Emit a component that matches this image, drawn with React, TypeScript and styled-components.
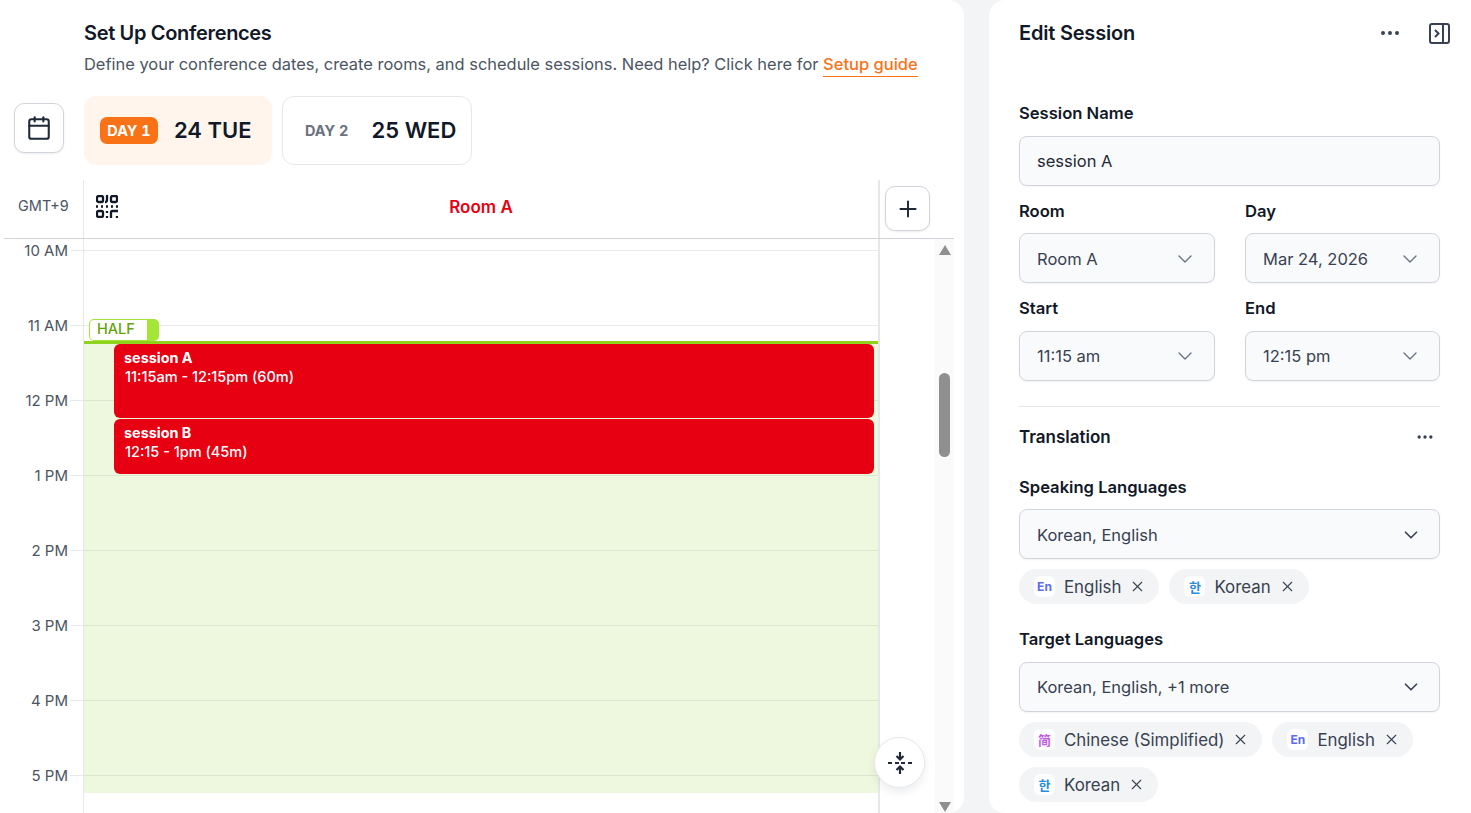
import React from "react";
import styled, { createGlobalStyle } from "styled-components";
import { Calendar, ChevronDown, Ellipsis, Plus, X } from "lucide-react";

const GlobalStyle = createGlobalStyle`
  html, body {
    margin: 0;
    padding: 0;
    height: 100%;
    overflow: hidden;
    background: #f3f4f6;
    font-family: Inter, "Noto Sans CJK KR", sans-serif;
    color: #111827;
  }
  * { box-sizing: border-box; }
`;

const Page = styled.div`
  display: flex;
  gap: 25px;
  height: 813px;
  overflow: hidden;
  background: #f3f4f6;
`;

// left side: the conference schedule
const SchedulePanel = styled.main`
  position: relative;
  width: 964px;
  height: 813px;
  flex: none;
  background: #fff;
  border-radius: 0 16px 16px 0;
  overflow: hidden;
`;

const Header = styled.header`
  padding: 21px 0 0 84px;
  height: 96px;
`;

const Title = styled.h1`
  margin: 0;
  font-size: 20px;
  line-height: 24px;
  font-weight: 600;
  letter-spacing: -0.33px;
  color: #111827;
`;

const Subtitle = styled.p`
  margin: 7px 0 0;
  font-size: 16.45px;
  line-height: 24px;
  color: #4b5563;
`;

const GuideLink = styled.a`
  color: #f97316;
  font-size: 16.5px;
  font-weight: 500;
  border-bottom: 1px solid #f97316;
  padding-bottom: 2px;
`;

const DayRow = styled.div`
  display: flex;
  height: 69px;
  padding-left: 14px;
`;

const IconButton = styled.button`
  display: flex;
  align-items: center;
  justify-content: center;
  width: ${(p) => p.$size}px;
  height: ${(p) => p.$size}px;
  flex: none;
  padding: 0;
  margin-top: ${(p) => p.$top ?? 0}px;
  background: #fff;
  border: 1px solid #d1d5db;
  border-radius: 10px;
  box-shadow: 0 1px 2px rgba(17, 24, 39, 0.08);
  color: #1f2937;
`;

const DayTabs = styled.div`
  display: flex;
  gap: 10px;
  margin-left: 20px;
`;

const DayTab = styled.div`
  display: flex;
  align-items: center;
  gap: ${(p) => (p.$active ? "16px" : "17px")};
  height: 69px;
  padding: ${(p) => (p.$active ? "0 19px 1px 15px" : "0 15px 1px 16px")};
  border-radius: 12px;
  background: ${(p) => (p.$active ? "#fff5ed" : "#fff")};
  border: 1px solid ${(p) => (p.$active ? "#fff5ed" : "#e5e7eb")};
`;

const DayBadge = styled.span`
  display: inline-flex;
  align-items: center;
  justify-content: center;
  width: ${(p) => (p.$active ? "58px" : "56px")};
  height: 27px;
  border-radius: 7px;
  font-size: 14.5px;
  font-weight: 700;
  font-variant-numeric: tabular-nums;
  color: ${(p) => (p.$active ? "#fff" : "#6b7280")};
  background: ${(p) => (p.$active ? "#f97316" : "transparent")};
`;

const DayDate = styled.span`
  font-size: 22px;
  font-weight: 600;
  color: #111827;
`;

const Schedule = styled.section`
  width: 950px;
  margin: 15px 0 0 4px;
`;

const ScheduleHead = styled.div`
  display: flex;
  height: 59px;
  border-bottom: 1px solid #d1d5db;
`;

const ZoneCell = styled.div`
  width: 80px;
  flex: none;
  padding: 17px 0 0 14px;
  font-size: 14.5px;
  line-height: 17px;
  font-variant-numeric: tabular-nums;
  color: #4b5563;
  border-right: 1px solid #e5e7eb;
`;

const RoomCell = styled.div`
  position: relative;
  width: 796px;
  flex: none;
  display: flex;
  align-items: center;
  justify-content: center;
  padding-bottom: 4px;
  font-size: 17px;
  font-weight: 600;
  color: #e60012;
  border-right: 2px solid #e5e7eb;
`;

const QrSlot = styled.span`
  position: absolute;
  left: 12px;
  top: 15px;
  display: flex;
  color: #111827;
`;

const AddCell = styled.div`
  padding: 6px 0 0 5px;
`;

const ScheduleBody = styled.div`
  display: flex;
  height: 574px;
`;

const Timeline = styled.div`
  position: relative;
  width: 876px;
  flex: none;
  padding-top: 11px;
  overflow: hidden;
  &::before {
    content: "";
    position: absolute;
    left: 79px;
    top: 0;
    bottom: 0;
    width: 1px;
    background: #e5e7eb;
  }
  &::after {
    content: "";
    position: absolute;
    left: 874px;
    top: 0;
    bottom: 0;
    width: 2px;
    background: #e5e7eb;
  }
`;

const HourRow = styled.div`
  display: flex;
  height: 75px;
`;

const HourLabel = styled.span`
  width: 66px;
  flex: none;
  margin-top: -8px;
  height: 18px;
  line-height: 18px;
  font-size: 15px;
  color: #4b5563;
  text-align: right;
  position: relative;
  z-index: 1;
  background: #fff;
  padding-right: 2px;
`;

const HourLine = styled.span`
  flex: 1;
  border-top: 1px solid #e9eaee;
  margin-right: 2px;
`;

const OpenHours = styled.div`
  position: absolute;
  left: 80px;
  top: 102px;
  width: 795px;
  height: 452px;
  background: rgba(132, 204, 22, 0.14);
  border-top: 3px solid #8fd31f;
`;

const HalfTag = styled.div`
  position: absolute;
  left: 85px;
  top: 80px;
  width: 70px;
  height: 22px;
  padding-left: 7px;
  font-size: 14.5px;
  line-height: 18px;
  font-weight: 500;
  color: #65a30d;
  background: #fff;
  border: 1px solid #a3e635;
  border-right: 12px solid #a3e635;
  border-radius: 5px;
`;

const SessionCard = styled.div`
  position: absolute;
  left: 110px;
  top: ${(p) => p.$top}px;
  width: 760px;
  height: ${(p) => p.$height}px;
  padding: 5px 10px;
  background: #e60012;
  border-radius: 6px;
  color: #fff;
`;

const SessionName = styled.div`
  font-size: 14.4px;
  line-height: 18px;
  font-weight: 700;
`;

const SessionTime = styled.div`
  margin-top: 1px;
  padding-left: 1px;
  font-size: 14.5px;
  line-height: 18px;
  font-weight: 500;
`;

const ScrollTrack = styled.div`
  width: 19px;
  margin-left: 55px;
  flex: none;
  display: flex;
  flex-direction: column;
  align-items: center;
  background: #fafafa;
  padding-top: 6px;
`;

const ScrollArrow = styled.span`
  width: 0;
  height: 0;
  border-left: 6.5px solid transparent;
  border-right: 6.5px solid transparent;
  border-bottom: ${(p) => (p.$down ? "0" : "10px solid #8f8f8f")};
  border-top: ${(p) => (p.$down ? "10px solid #8f8f8f" : "0")};
  margin-top: ${(p) => (p.$down ? "345px" : "0")};
`;

const ScrollThumb = styled.span`
  width: 11px;
  height: 84px;
  margin-top: 118px;
  border-radius: 6px;
  background: #8f8f8f;
`;

const FoldButton = styled.button`
  position: absolute;
  left: 874px;
  top: 737px;
  width: 51px;
  height: 51px;
  padding: 0;
  display: flex;
  align-items: center;
  justify-content: center;
  background: #fff;
  border: 1px solid #e5e7eb;
  border-radius: 50%;
  box-shadow: 0 4px 10px rgba(17, 24, 39, 0.08);
  color: #1f2937;
`;

// right side: the session form
const EditPanel = styled.aside`
  flex: 1;
  height: 813px;
  padding: 0 31px 0 30px;
  background: #fff;
  border-radius: 16px 0 0 16px;
  overflow: hidden;
`;

const EditHeader = styled.div`
  display: flex;
  align-items: center;
  height: 66px;
  margin-right: -10px;
  margin-bottom: 36px;
`;

const EditTitle = styled.h2`
  flex: 1;
  margin: 0;
  font-size: 20px;
  font-weight: 600;
  letter-spacing: -0.2px;
  color: #111827;
`;

const HeaderIcon = styled.span`
  display: flex;
  color: #374151;
  margin-left: ${(p) => p.$gap || 0}px;
`;

const FieldLabel = styled.label`
  display: block;
  height: 22px;
  margin-bottom: ${(p) => p.$below ?? 12}px;
  font-size: 16.6px;
  line-height: 22px;
  font-weight: 600;
  color: #111827;
`;

const Control = styled.div`
  display: flex;
  align-items: center;
  justify-content: space-between;
  height: 50px;
  padding: ${(p) => (p.$low ? "2px" : "0")} 17px 0;
  background: #f9fafb;
  border: 1px solid #d1d5db;
  border-radius: 8px;
  box-shadow: 0 1px 2px rgba(17, 24, 39, 0.05);
  font-size: 16.5px;
  color: ${(p) => (p.$plain ? "#1f2937" : "#374151")};
  svg {
    flex: none;
    color: ${(p) => (p.$muted ? "#6b7280" : "#374151")};
  }
`;

const FieldGrid = styled.div`
  display: grid;
  grid-template-columns: 196px 195px;
  column-gap: 30px;
  margin-top: 14px;
`;

const Divider = styled.hr`
  margin: 25px 0 0;
  border: 0;
  border-top: 1px solid #e5e7eb;
`;

const SectionHead = styled.div`
  display: flex;
  align-items: center;
  justify-content: space-between;
  height: 60px;
  padding-right: 5px;
  margin-bottom: 9px;
`;

const SectionTitle = styled.h3`
  margin: 0;
  font-size: 17px;
  font-weight: 600;
  color: #111827;
`;

const ChipRow = styled.div`
  display: flex;
  flex-wrap: wrap;
  gap: 10px;
  margin: 10px 0 ${(p) => p.$below ?? 0}px;
`;

const Chip = styled.div`
  display: flex;
  align-items: center;
  height: 35px;
  padding: 0 13px 0 15px;
  border-radius: 18px;
  background: #f3f4f6;
  font-size: 16.85px;
  color: #374151;
`;

const ChipGlyph = styled.span`
  display: flex;
  align-items: center;
  justify-content: center;
  width: 21px;
  height: 21px;
  margin-right: 9px;
  border-radius: 6px;
  background: #fff;
  font-size: ${(p) => (p.$latin ? "12px" : "13px")};
  font-weight: 700;
  color: ${(p) => p.$color};
`;

const ChipClose = styled.span`
  display: flex;
  margin-left: 8px;
  color: #374151;
`;

const DAY_TABS = [
  { label: "DAY 1", date: "24 TUE", active: true },
  { label: "DAY 2", date: "25 WED", active: false },
];

const HOURS = ["10 AM", "11 AM", "12 PM", "1 PM", "2 PM", "3 PM", "4 PM", "5 PM"];

const LANGS = {
  en: { glyph: "En", name: "English", color: "#5b6cf0", latin: true },
  ko: { glyph: "한", name: "Korean", color: "#2b8de0", latin: false },
  zh: { glyph: "简", name: "Chinese (Simplified)", color: "#c05ee0", latin: false },
};

const QrIcon = () => (
  <svg width="22" height="23" viewBox="0 0 22 23" fill="none" stroke="currentColor" strokeWidth="2.3">
    <rect x="1" y="1" width="6" height="6" rx="1.5" />
    <rect x="15" y="1" width="6" height="6" rx="1.5" />
    <rect x="1" y="16" width="6" height="6" rx="1.5" />
    <path d="M11 0v5M11 5c0 1.500-.5 2-2 2" />
    <path d="M0 11.500h2M5 11.500h2M10 11.500h2M15 11.500h2M20 11.500h2" />
    <path d="M11 16v2M11 21v2" />
    <path d="M15 23v-5.500c0-1 .5-1.500 1.500-1.500H22M21 21v2" />
  </svg>
);

const CollapseIcon = () => (
  <svg width="21" height="21" viewBox="0 0 21 21" fill="none" stroke="currentColor" strokeWidth="2">
    <rect x="1" y="1" width="19" height="19" rx="2" />
    <path d="M14 1v19" />
    <path d="M6 7l3.500 3.500L6 14" />
  </svg>
);

const FoldIcon = () => (
  <svg width="24" height="24" viewBox="0 0 24 24" fill="none" stroke="currentColor" strokeWidth="2.2">
    <path d="M0 12h4M7 12h4M13 12h4M20 12h4" />
    <path d="M12 1v7M8.500 5 12 8.500 15.500 5" />
    <path d="M12 23v-7M8.500 19 12 15.500 15.500 19" />
  </svg>
);

const LangChip = ({ lang }: { lang: keyof typeof LANGS }) => {
  const l = LANGS[lang];
  return (
    <Chip>
      <ChipGlyph $color={l.color} $latin={l.latin}>{l.glyph}</ChipGlyph>
      {l.name}
      <ChipClose><X size={17} strokeWidth={1.6} /></ChipClose>
    </Chip>
  );
};

const Field = ({ label, value, below, low }: { label: string; value: string; below: number; low?: boolean }) => (
  <div>
    <FieldLabel $below={below}>{label}</FieldLabel>
    <Control $muted $low={low}>
      {value}
      <ChevronDown size={24} strokeWidth={1.4} />
    </Control>
  </div>
);

const App: React.FC = () => {
  return (
    <Page>
      <GlobalStyle />
      <SchedulePanel>
        <Header>
          <Title>Set Up Conferences</Title>
          <Subtitle>
            Define your conference dates, create rooms, and schedule sessions. Need help? Click here for{" "}
            <GuideLink>Setup guide</GuideLink>
          </Subtitle>
        </Header>
        <DayRow>
          <IconButton $size={50} $top={7}><Calendar size={26} strokeWidth={1.9} /></IconButton>
          <DayTabs>
            {DAY_TABS.map((d) => (
              <DayTab key={d.label} $active={d.active}>
                <DayBadge $active={d.active}>{d.label}</DayBadge>
                <DayDate>{d.date}</DayDate>
              </DayTab>
            ))}
          </DayTabs>
        </DayRow>
        <Schedule>
          <ScheduleHead>
            <ZoneCell>GMT+9</ZoneCell>
            <RoomCell>
              <QrSlot><QrIcon /></QrSlot>
              Room A
            </RoomCell>
            <AddCell>
              <IconButton $size={45}><Plus size={26} strokeWidth={1.8} /></IconButton>
            </AddCell>
          </ScheduleHead>
          <ScheduleBody>
            <Timeline>
              {HOURS.map((h) => (
                <HourRow key={h}>
                  <HourLabel>{h}</HourLabel>
                  <HourLine />
                </HourRow>
              ))}
              <OpenHours />
              <HalfTag>HALF</HalfTag>
              <SessionCard $top={105} $height={74}>
                <SessionName>session A</SessionName>
                <SessionTime>11:15am - 12:15pm (60m)</SessionTime>
              </SessionCard>
              <SessionCard $top={180} $height={55}>
                <SessionName>session B</SessionName>
                <SessionTime>12:15 - 1pm (45m)</SessionTime>
              </SessionCard>
            </Timeline>
            <ScrollTrack>
              <ScrollArrow />
              <ScrollThumb />
              <ScrollArrow $down />
            </ScrollTrack>
          </ScheduleBody>
        </Schedule>
        <FoldButton><FoldIcon /></FoldButton>
      </SchedulePanel>

      <EditPanel>
        <EditHeader>
          <EditTitle>Edit Session</EditTitle>
          <HeaderIcon><Ellipsis size={24} /></HeaderIcon>
          <HeaderIcon $gap={27}><CollapseIcon /></HeaderIcon>
        </EditHeader>
        <FieldLabel>Session Name</FieldLabel>
        <Control $plain>session A</Control>
        <FieldGrid>
          <Field label="Room" value="Room A" below={11} low />
          <Field label="Day" value="Mar 24, 2026" below={11} low />
        </FieldGrid>
        <FieldGrid>
          <Field label="Start" value="11:15 am" below={12} />
          <Field label="End" value="12:15 pm" below={12} />
        </FieldGrid>
        <Divider />
        <SectionHead>
          <SectionTitle>Translation</SectionTitle>
          <HeaderIcon><Ellipsis size={20} /></HeaderIcon>
        </SectionHead>
        <FieldLabel $below={11}>Speaking Languages</FieldLabel>
        <Control $low>
          Korean, English
          <ChevronDown size={22} strokeWidth={1.8} />
        </Control>
        <ChipRow $below={24}>
          <LangChip lang="en" />
          <LangChip lang="ko" />
        </ChipRow>
        <FieldLabel>Target Languages</FieldLabel>
        <Control>
          Korean, English, +1 more
          <ChevronDown size={22} strokeWidth={1.8} />
        </Control>
        <ChipRow>
          <LangChip lang="zh" />
          <LangChip lang="en" />
          <LangChip lang="ko" />
        </ChipRow>
      </EditPanel>
    </Page>
  );
};

export default App;
